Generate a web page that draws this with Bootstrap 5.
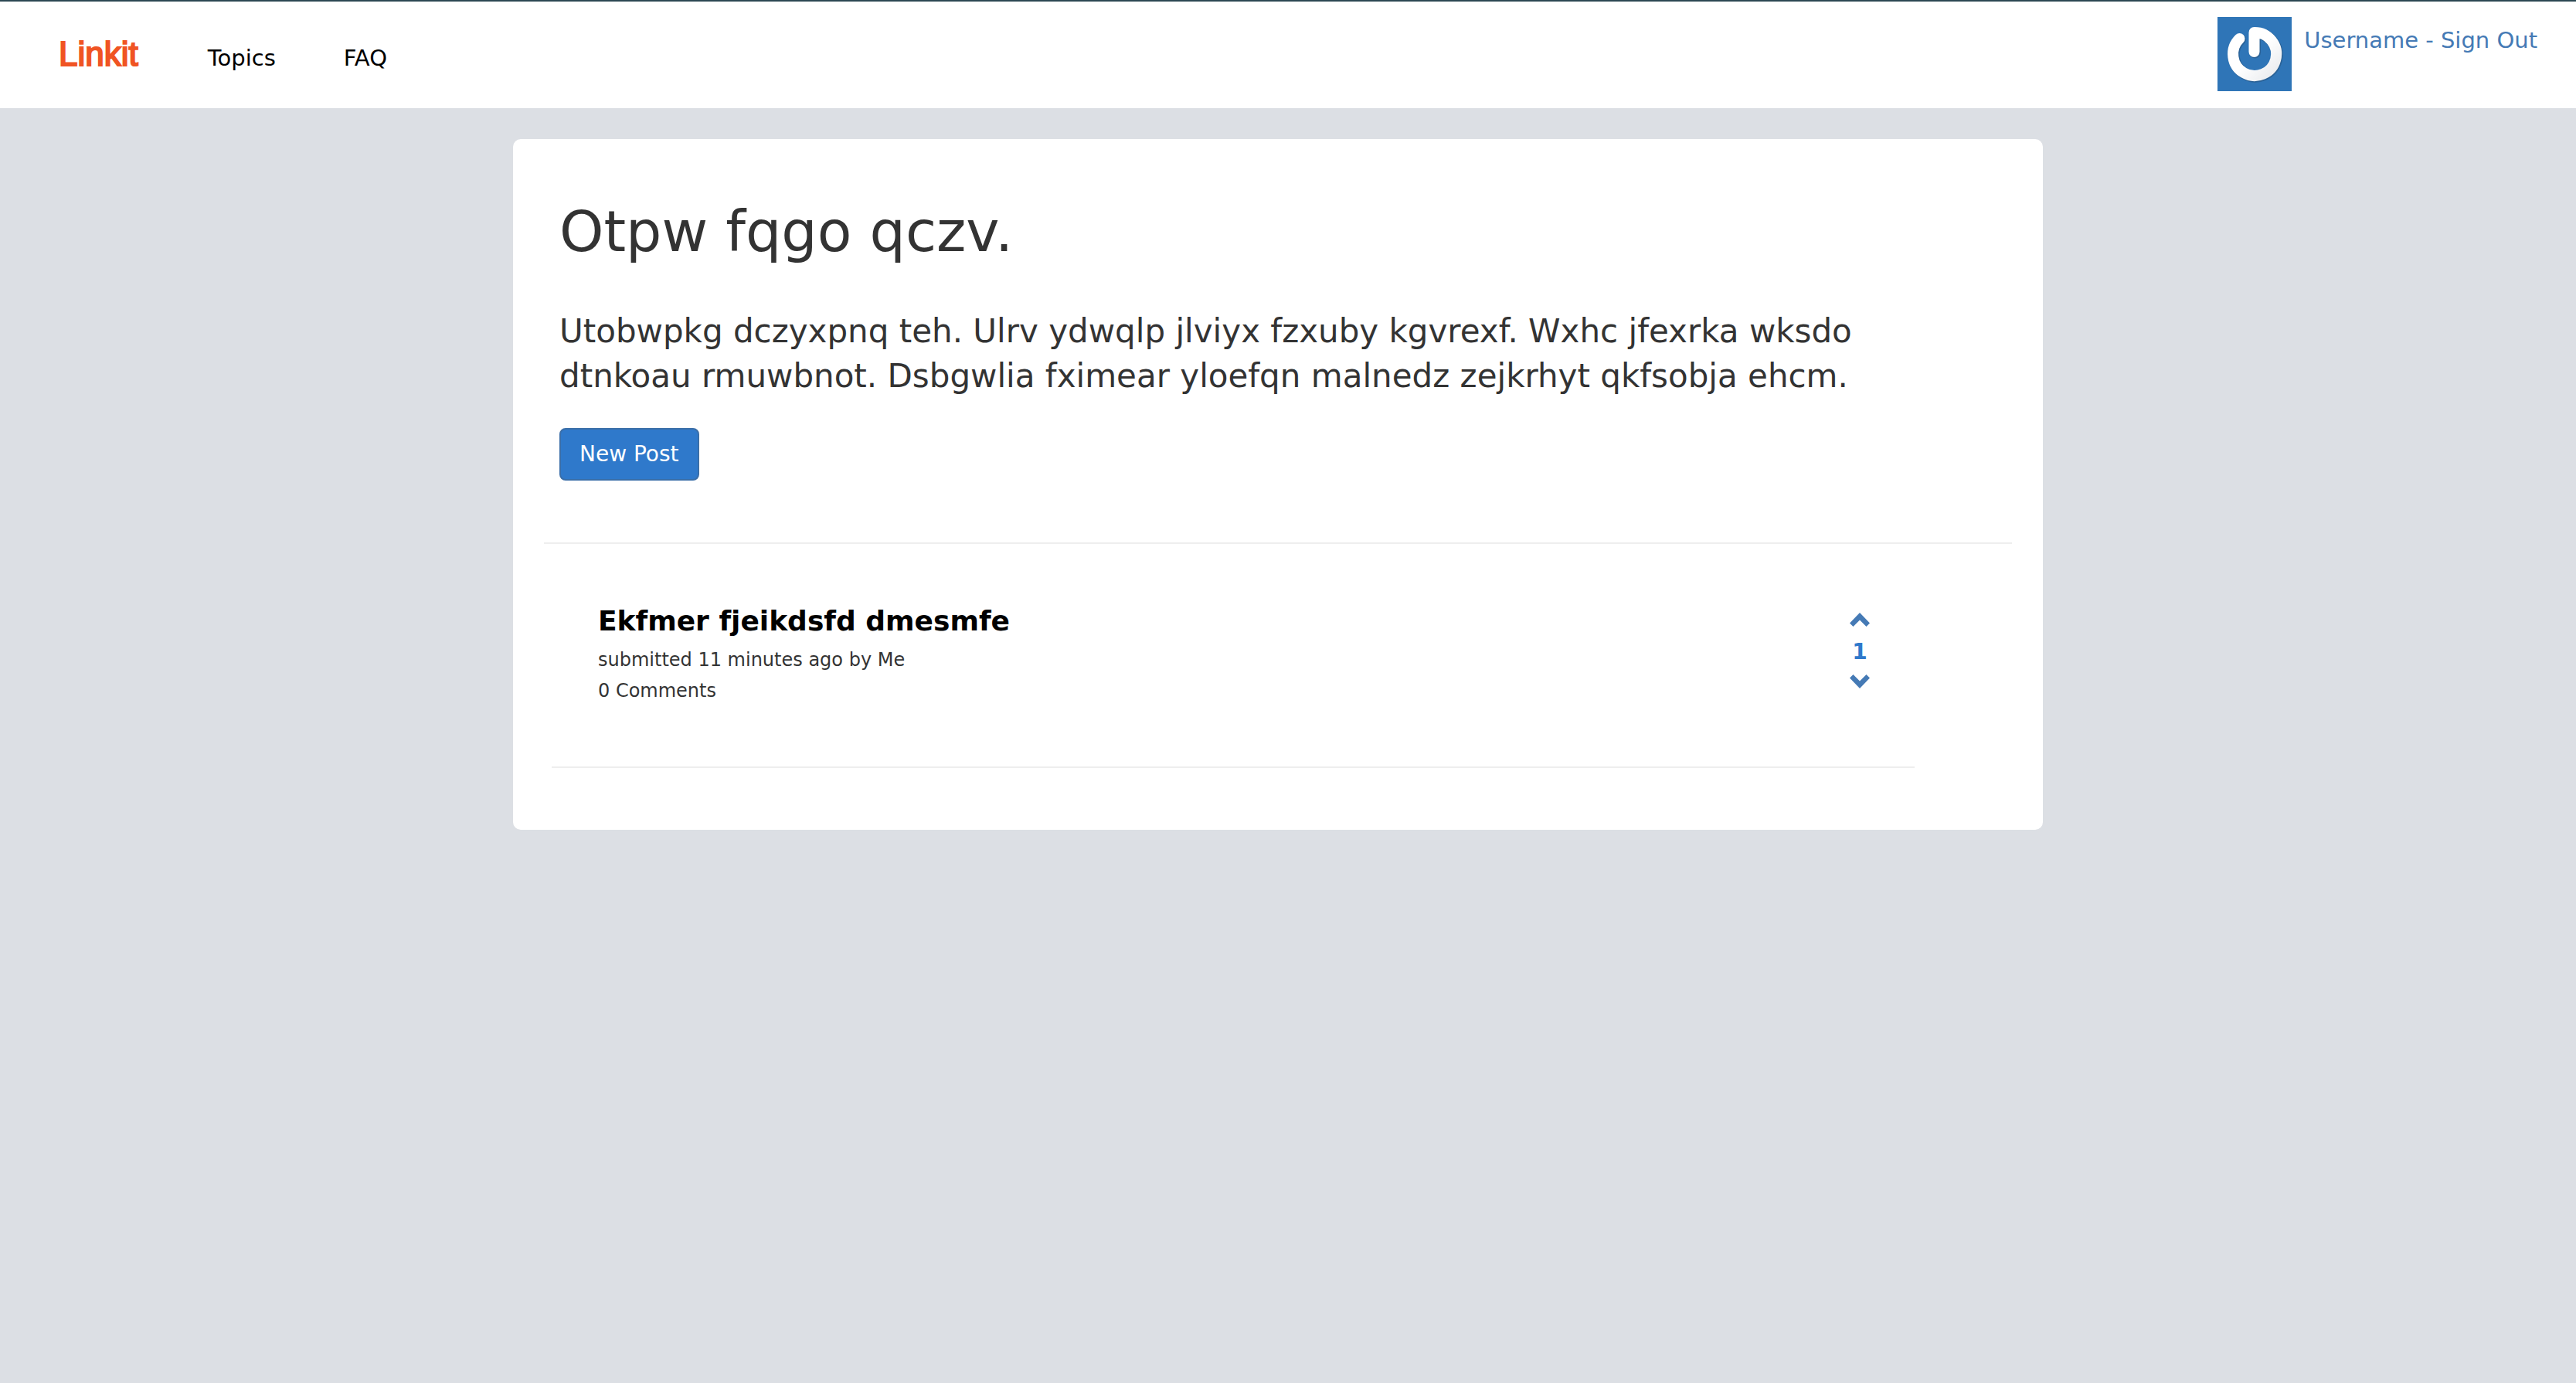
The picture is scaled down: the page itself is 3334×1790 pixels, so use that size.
<!DOCTYPE html>
<html lang="en">
<head>
<meta charset="utf-8">
<meta name="viewport" content="width=device-width, initial-scale=1">
<title>Linkit</title>
<link href="https://cdn.jsdelivr.net/npm/bootstrap@5.3.0/dist/css/bootstrap.min.css" rel="stylesheet">
<style>
  body { background: #dcdfe4; color: #333; font-family: Verdana, "DejaVu Sans", sans-serif; font-size: 28px; line-height: 40px; }
  a { text-decoration: none; color: #337ab7; }
  .site-nav { background: #fff; border-top: 2px solid #2b4853; padding: 20px 50px 22px 76px; font-size: 29px; }
  .site-brand { color: #f05423; font-family: "Liberation Sans", Arial, sans-serif; font-size: 44px; line-height: 48px; -webkit-text-stroke: 2px #f05423; }
  .site-links { gap: 88px; margin-left: 90px; }
  .site-links a { color: #000; }
  .user-box { gap: 16px; }
  .user-link { color: #457ab5; padding-top: 10px; }
  .avatar { width: 96px; height: 96px; }
  .page-wrap { padding: 40px 26px 40px 0; }
  .panel-box { max-width: 1980px; border-radius: 10px; padding: 60px 40px 80px; }
  .intro { padding: 0 20px; }
  .intro h1 { font-size: 73px; line-height: 80px; font-weight: 400; margin: 20px 0 60px; }
  .intro-text { max-width: 1764px; font-size: 42px; line-height: 58px; margin-bottom: 38px; }
  .btn-post { background: #2f79cb; border: 2px solid #3a6ea8; border-radius: 8px; color: #fff; font-size: 28px; line-height: 40px; padding: 12px 24px; }
  .rule { border: 0; border-top: 2px solid #eee; opacity: 1; margin: 0; }
  .intro-rule { margin-top: 80px; }
  .post { max-width: 1764px; margin-left: 10px; }
  .post-row { padding: 78px 58px 78px 60px; }
  .post-title { color: #000; font-size: 36px; line-height: 44px; font-weight: 700; margin: 0 0 8px; }
  .post-title a { color: #000; }
  .post-meta { font-size: 24px; line-height: 40px; margin: 0; }
  .vote-box { padding-top: 11px; }
  .vote-count { color: #2f79cb; font-weight: 700; line-height: 58px; padding-top: 4px; }
  .vote-btn { border: 0; background: none; padding: 0; line-height: 0; color: #457ab5; }
  .vote-btn svg { width: 26px; height: 18px; }
</style>
<script src="https://cdn.jsdelivr.net/npm/bootstrap@5.3.0/dist/js/bootstrap.bundle.min.js"></script>
</head>
<body>
<header class="site-nav d-flex align-items-start justify-content-between">
  <nav class="d-flex align-items-baseline pt-4" aria-label="Main">
    <a class="site-brand" href="#">Linkit</a>
    <div class="site-links d-flex">
      <a href="#">Topics</a>
      <a href="#">FAQ</a>
    </div>
  </nav>
  <div class="user-box d-flex align-items-start">
    <svg class="avatar" viewBox="0 0 96 96" role="img" aria-label="Avatar">
      <defs>
        <linearGradient id="shine" x1="0" y1="0" x2="1" y2="1"><stop offset="0.5" stop-color="#fff"/><stop offset="1" stop-color="#e9ebee"/></linearGradient>
      </defs>
      <rect width="96" height="96" fill="#2f75b7"/>
      <path d="M47.500 45V20A28 28 0 1 1 28.500 28" transform="translate(1 1)" fill="none" stroke="#2a6297" stroke-width="15" stroke-linecap="round" stroke-linejoin="round"/>
      <path d="M47.500 45V20A28 28 0 1 1 28.500 28" fill="none" stroke="url(#shine)" stroke-width="14" stroke-linecap="round" stroke-linejoin="round"/>
    </svg>
    <a class="user-link" href="#">Username - Sign Out</a>
  </div>
</header>
<main class="page-wrap">
  <div class="panel-box bg-white mx-auto">
    <section class="intro">
      <h1>Otpw fqgo qczv.</h1>
      <p class="intro-text">Utobwpkg dczyxpnq teh. Ulrv ydwqlp jlviyx fzxuby kgvrexf. Wxhc jfexrka wksdo dtnkoau rmuwbnot. Dsbgwlia fximear yloefqn malnedz zejkrhyt qkfsobja ehcm.</p>
      <button class="btn btn-post" type="button">New Post</button>
    </section>
    <hr class="rule intro-rule">
    <article class="post">
      <div class="post-row d-flex justify-content-between">
        <div>
          <h2 class="post-title"><a href="#">Ekfmer fjeikdsfd dmesmfe</a></h2>
          <p class="post-meta">submitted 11 minutes ago by Me</p>
          <p class="post-meta">0 Comments</p>
        </div>
        <div class="vote-box d-flex flex-column align-items-center">
          <button class="vote-btn" type="button" aria-label="Vote up"><svg viewBox="0 0 26 18"><path d="M13 0L26 13.500L21.500 18L13 9.500L4.500 18L0 13.500Z" fill="currentColor"/></svg></button>
          <span class="vote-count">1</span>
          <button class="vote-btn" type="button" aria-label="Vote down"><svg viewBox="0 0 26 18"><path d="M13 18L26 4.500L21.500 0L13 8.500L4.500 0L0 4.500Z" fill="currentColor"/></svg></button>
        </div>
      </div>
      <hr class="rule">
    </article>
  </div>
</main>
</body>
</html>
